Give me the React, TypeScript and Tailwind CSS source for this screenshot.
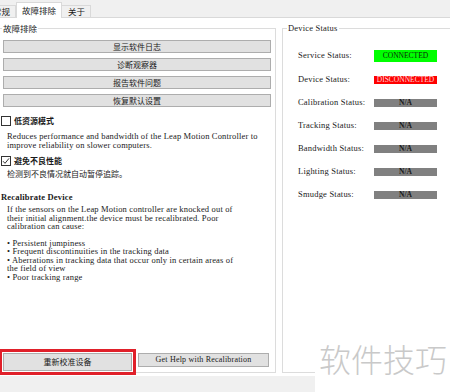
import React from 'react'

const cjk = "font-['Noto_Sans_CJK_SC',sans-serif]"
const serif = "font-['Liberation_Serif','Noto_Sans_CJK_SC',serif]"

const Btn = ({ children, className = '' }: { children: React.ReactNode; className?: string }) => (
    <div className={`flex items-center justify-center bg-[#e1e1e1] border border-[#adadad] text-[8px] leading-none text-[#1a1a1a] ${className}`}>
        {children}
    </div>
)

const CheckBox = ({ checked }: { checked?: boolean }) => (
    <span className='w-[10px] h-[10px] border border-[#333] bg-white flex items-center justify-center shrink-0'>
        {checked && (
            <svg width='8' height='8' viewBox='0 0 8 8'>
                <path d='M1 4.2 L3 6.3 L7 1.4' fill='none' stroke='#333' strokeWidth='1' />
            </svg>
        )}
    </span>
)

const statuses = [
    { label: 'Service Status:', value: 'CONNECTED', box: 'bg-[#00ff00] text-[#0a2a0a] h-[12px]' },
    { label: 'Device Status:', value: 'DISCONNECTED', box: 'bg-[#ff0000] text-[#ffd8d8] h-[8px]' },
    { label: 'Calibration Status:', value: 'N/A', box: 'bg-[#808080] text-[#1a1a1a] font-bold h-[8px]' },
    { label: 'Tracking Status:', value: 'N/A', box: 'bg-[#808080] text-[#1a1a1a] font-bold h-[8px]' },
    { label: 'Bandwidth Status:', value: 'N/A', box: 'bg-[#808080] text-[#1a1a1a] font-bold h-[8px]' },
    { label: 'Lighting Status:', value: 'N/A', box: 'bg-[#808080] text-[#1a1a1a] font-bold h-[8px]' },
    { label: 'Smudge Status:', value: 'N/A', box: 'bg-[#808080] text-[#1a1a1a] font-bold h-[8px]' },
]

export default function App() {
    return (
        <div className='relative w-[450px] h-[392px] overflow-hidden bg-[#f0f0f0] flex flex-col text-[#1a1a1a]'>
            {/* tab strip */}
            <div className={`h-[17px] flex items-end text-[8.5px] leading-none ${cjk}`}>
                <div className='-ml-[12px] h-[12px] px-[5px] flex items-center border-t border-r border-[#d9d9d9]'>常规</div>
                <div className='relative z-10 -mb-[1px] h-[16px] px-[5px] flex items-center bg-white border-t border-x border-[#d9d9d9]'>故障排除</div>
                <div className='h-[12px] pl-[6px] pr-[5px] flex items-center border-t border-r border-[#d9d9d9]'>关于</div>
            </div>

            {/* tab page */}
            <div className='h-[359px] bg-white border-t border-[#d9d9d9] flex gap-[6px] pt-[5px]'>
                <fieldset className='-ml-[6px] w-[282px] h-[350px] border border-[#dcdcdc] flex flex-col shrink-0'>
                    <legend className={`ml-[7px] px-[1px] text-[8.5px] leading-[11px] ${cjk}`}>故障排除</legend>
                    <div className='flex flex-col flex-1'>
                        <div className={`ml-[8px] w-[268px] mt-[6px] flex flex-col gap-[5px] ${cjk}`}>
                            <Btn className='h-[13px]'>显示软件日志</Btn>
                            <Btn className='h-[13px]'>诊断观察器</Btn>
                            <Btn className='h-[13px]'>报告软件问题</Btn>
                            <Btn className='h-[13px]'>恢复默认设置</Btn>
                        </div>

                        <div className={`ml-[6px] mt-[8px] h-[11px] flex items-center gap-[3px] text-[8px] font-bold leading-none ${cjk}`}>
                            <CheckBox />
                            <span>低资源模式</span>
                        </div>
                        <div className={`ml-[12px] mt-[6px] text-[8.5px] leading-[9px] tracking-[0.16px] whitespace-nowrap ${serif}`}>
                            <div>Reduces performance and bandwidth of the Leap Motion Controller to</div>
                            <div>improve reliability on slower computers.</div>
                        </div>

                        <div className={`ml-[6px] mt-[5px] h-[11px] flex items-center gap-[3px] text-[8px] font-bold leading-none ${cjk}`}>
                            <CheckBox checked />
                            <span>避免不良性能</span>
                        </div>
                        <div className={`ml-[12px] mt-[3px] text-[8px] leading-[10px] ${cjk}`}>检测到不良情况就自动暂停追踪。</div>

                        <div className={`ml-[6px] mt-[14px] text-[8.5px] leading-[9px] font-bold tracking-[0.2px] ${serif}`}>Recalibrate Device</div>
                        <div className={`ml-[12px] mt-[3px] text-[8.5px] leading-[8.5px] tracking-[0.16px] whitespace-nowrap ${serif}`}>
                            <div>If the sensors on the Leap Motion controller are knocked out of</div>
                            <div>their initial alignment.the device must be recalibrated. Poor</div>
                            <div>calibration can cause:</div>
                            <div className='mt-[8px]'>• Persistent jumpiness</div>
                            <div>• Frequent discontinuities in the tracking data</div>
                            <div>• Aberrations in tracking data that occur only in certain areas of</div>
                            <div>the field of view</div>
                            <div>• Poor tracking range</div>
                        </div>

                        <div className='mt-auto -mb-[3px] ml-[4px] flex items-start gap-[2px] relative z-10'>
                            <div className='w-[137px] h-[26px] border-[3px] border-[#e0202a] p-[1px]'>
                                <Btn className={`h-full ${cjk}`}>重新校准设备</Btn>
                            </div>
                            <Btn className={`mt-[4px] w-[131px] h-[14px] tracking-[0.2px] ${serif}`}>Get Help with Recalibration</Btn>
                        </div>
                    </div>
                </fieldset>

                <fieldset className='w-[175px] h-[350px] border border-[#dcdcdc] shrink-0'>
                    <legend className={`ml-[4px] px-[1px] text-[8.5px] leading-[11px] tracking-[0.2px] ${serif}`}>Device Status</legend>
                    <div className={`flex flex-col pt-[9px] ${serif}`}>
                        {statuses.map((s, i) => (
                            <div key={s.label} className={`flex items-center ${i === 0 ? 'h-[25px]' : 'h-[23px]'}`}>
                                <span className='ml-[15px] w-[76px] text-[8.5px] leading-none tracking-[0.2px] whitespace-nowrap'>{s.label}</span>
                                <span className={`w-[63px] flex items-center justify-center text-[7.5px] leading-none ${s.box}`}>{s.value}</span>
                            </div>
                        ))}
                    </div>
                </fieldset>
            </div>

            {/* watermark overlay */}
            <div className={`absolute right-0 bottom-0 w-[135px] h-[54px] bg-white pl-[4px] text-[32px] leading-[40px] font-light text-[#c9c9c9] ${cjk}`}>
                软件技巧
            </div>
        </div>
    )
}
